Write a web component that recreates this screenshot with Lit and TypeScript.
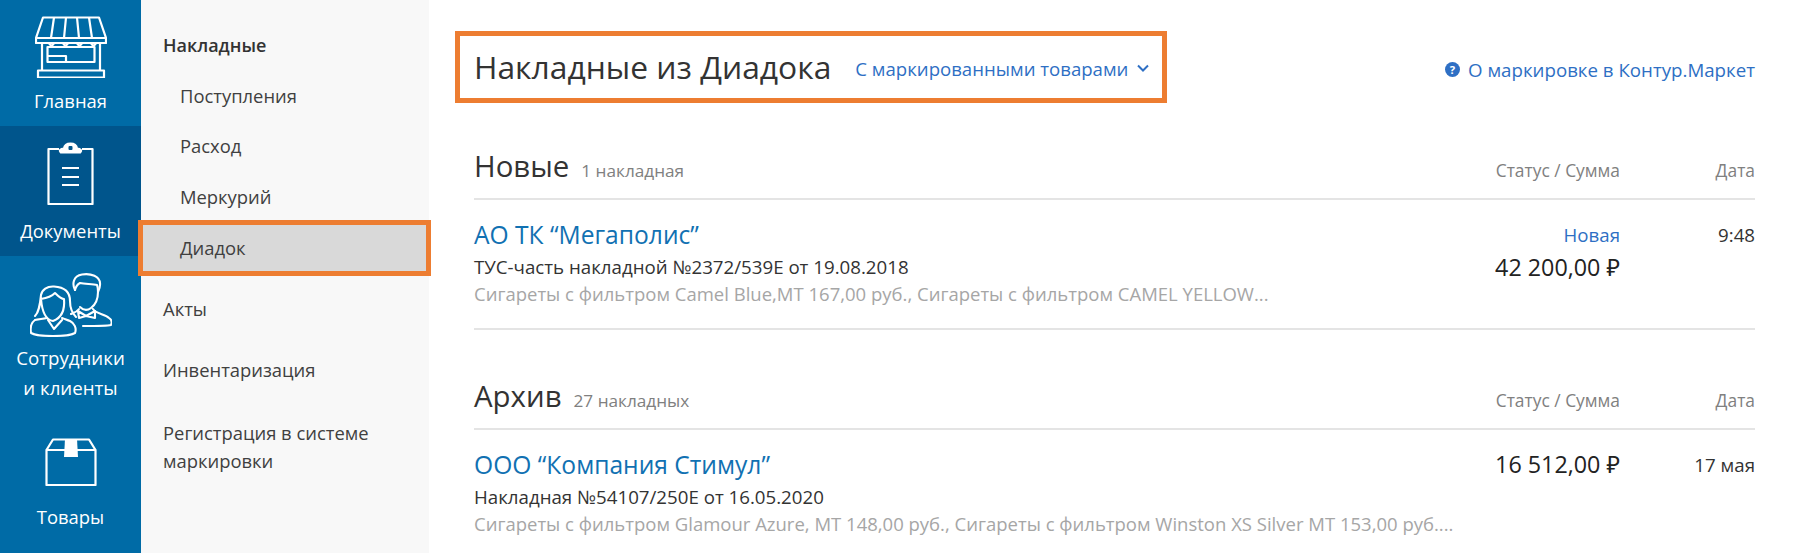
import { LitElement, html, css, svg } from "lit";
import { customElement } from "lit/decorators.js";

const shop = svg`<g fill="none" stroke="#fff" stroke-width="2.2" stroke-linejoin="round">
<path d="M8 1.500H64L71 22V27H1V22Z"/><path d="M1 22H71"/>
<path d="M19 1.500 16 22M31 1.500 29 22M42 1.500 44 22M54 1.500 57 22"/>
<path d="M14 27C15 30 18 30 19 27M28 27C29 30 32 30 33 27M42 27C43 30 46 30 47 27M56 27C57 30 60 30 61 27"/>
<path d="M7 27V54M65 27V54"/><path d="M12.500 31H59.500V46H12.500Z"/><path d="M12.500 40H31V46"/>
<path d="M3 54.500H69V61.500H3Z"/></g>`;
const doc = svg`<g fill="none" stroke="#fff" stroke-width="2.2" stroke-linejoin="round">
<path d="M12 8H1.500V63H45.500V8H35"/>
<path d="M14 11.500C12 10 13 7.500 17 7.500C18 1 29 1 30 7.500C34 7.500 35 10 33 11.500Z" fill="#fff"/>
<path d="M15 27H32M15 36H32M15 44H32"/></g><rect x="21.500" y="5" width="4" height="4" rx="1" fill="#00558c"/>`;
const people = svg`<g fill="none" stroke="#fff" stroke-width="2.1" stroke-linejoin="round" stroke-linecap="round">
<path d="M45 17C42 11 43 3 52 1.500C60 0 71 3 70 12C70 15 69 17 68 19"/>
<path d="M45 17C46 13 48 11 50 10C55 11 63 11 67 12C68 14 68 17 68 19C68 26 65 32 61 35C57 38 53 37 50 34"/>
<path d="M49 36C47 39 43 40 41 41M63 36C66 41 75 41 79 45C82 47 82 50 81 52C77 53 65 53 53 53"/>
<path d="M48 38 56 43 65 38 65 45 56 43 49 45Z"/>
<path d="M11 22C12 17 17 13 24 13.500C33 14 40 18 40 28C40 36 43 41 46 44"/>
<path d="M11 22C10 32 9 39 5 43M11 26C17 25 22 23 25 20C29 24 33 26 34 26C35 37 31 45 23 48C16 47 12 38 11 26Z"/>
<path d="M18 47 24 56 32 47M5 47C2 49 0 54 1 60C8 64 38 64 45 60C47 55 44 50 40 48C37 47 35 46 32 45M17 45C13 46 8 46 5 47Z"/></g>`;
const box = svg`<g fill="none" stroke="#fff" stroke-width="2.200" stroke-linejoin="round">
<path d="M1.500 12H50.500V47H1.500Z"/><path d="M1.500 12 8 1.500H44L50.500 12"/></g>
<path d="M20 1H32L33 19H19Z" fill="#fff"/>`;

interface Row { name: string; doc: string; desc: string; status?: string; sum: string; date: string; }
const sections: { title: string; count: string; rows: Row[] }[] = [
  { title: "Новые", count: "1 накладная", rows: [{ name: "АО ТК “Мегаполис”", doc: "ТУС-часть накладной №2372/539Е от 19.08.2018", desc: "Сигареты с фильтром Camel Blue,МТ 167,00 руб., Сигареты с фильтром CAMEL YELLOW...", status: "Новая", sum: "42 200,00 ₽", date: "9:48" }] },
  { title: "Архив", count: "27 накладных", rows: [{ name: "ООО “Компания Стимул”", doc: "Накладная №54107/250Е от 16.05.2020", desc: "Сигареты с фильтром Glamour Azure, МТ 148,00 руб., Сигареты с фильтром Winston XS Silver МТ 153,00 руб....", sum: "16 512,00 ₽", date: "17 мая" }] },
];

@customElement("app-root")
export class AppRoot extends LitElement {
  static styles = css`
    :host { display: flex; width: 1800px; height: 553px; overflow: hidden; background: #fff; font-family: "Open Sans", "Noto Sans", sans-serif; color: #333; }
    .rail { width: 141px; flex: none; background: #006ba6; color: #fff; display: flex; flex-direction: column; font-size: 18.4px; line-height: 24px; }
    .rail-item { display: flex; flex-direction: column; align-items: center; text-align: center; box-sizing: border-box; }
    .rail-item svg { display: block; }
    .home { height: 126px; padding-top: 16px; }
    .home span { margin-top: 11px; }
    .docs { height: 130px; background: #00558c; padding-top: 15px; }
    .docs span { margin-top: 14px; }
    .people { height: 168px; padding-top: 17px; line-height: 30px; font-size: 18.7px; }
    .people span { margin-top: 6px; }
    .goods { padding-top: 14px; }
    .goods span { margin-top: 19px; }
    .nav { width: 288px; flex: none; background: #f8f8f8; padding-top: 31px; box-sizing: border-box; font-size: 18.4px; color: #404040; line-height: 28px; }
    .nav-h { padding-left: 22px; font-weight: 600; color: #333; font-size: 18px; }
    .nav-sub { padding-left: 39px; margin-top: 22.67px; }
    .nav-active { margin: 9px -2px 0 -3px; height: 56px; box-sizing: border-box; border: 5px solid #ed7d31; background: #d9d9d9; padding: 9px 0 0 37px; }
    .nav-top { padding-left: 22px; margin-top: 33px; }
    .nav-top.first { margin-top: 19px; }
    .nav-top.reg { margin-top: 35px; }
    .main { flex: 1; padding: 31px 45px 0 45px; min-width: 0; }
    .head { display: flex; justify-content: space-between; align-items: center; }
    .head-box { margin-left: -19px; width: 712px; height: 72px; box-sizing: border-box; border: 5px solid #ed7d31; display: flex; align-items: center; padding-left: 14px; }
    .title { font-size: 31.8px; color: #333; margin-top: -2px; white-space: nowrap; }
    .filter { margin-left: 24px; font-size: 18.6px; color: #2e6fc4; display: flex; align-items: center; gap: 9px; margin-top: 2px; white-space: nowrap; }
    .about { font-size: 18.7px; color: #2e6fc4; display: flex; align-items: center; gap: 8px; margin-top: 4px; }
    .sec-head { display: flex; align-items: baseline; height: 56px; border-bottom: 2px solid #e4e4e4; box-sizing: border-box; padding-top: 2px; }
    .sec-title { font-size: 29.4px; color: #333; }
    .sec-count { font-size: 17.2px; color: #808080; margin-left: 12px; }
    .col-status { width: 160px; text-align: right; flex: none; padding-top: 2px; }
    .col-date { width: 135px; text-align: right; flex: none; }
    .spacer { flex: 1; min-width: 0; }
    .th { font-size: 17.4px; color: #808080; padding: 0; }
    .row { display: flex; border-bottom: 2px solid #e4e4e4; height: 130px; box-sizing: border-box; padding-top: 16px; }
    .name { font-size: 24.6px; color: #1171b2; line-height: 38px; }
    .doc { font-size: 18.7px; color: #333; line-height: 26px; }
    .desc { font-size: 18.5px; color: #a6a6a6; line-height: 28px; white-space: nowrap; }
    .status { font-size: 18.7px; color: #2e6fc4; line-height: 33px; }
    .sum { font-size: 23.3px; color: #222; line-height: 32px; white-space: nowrap; }
    .date { font-size: 18.7px; color: #333; line-height: 32px; padding-top: 3px; }
    .gap-first { height: 41px; }
    .gap { height: 44px; }
  `;
  render() {
    return html`
      <div class="rail">
        <div class="rail-item home"><svg width="72" height="62" viewBox="0 0 72 62">${shop}</svg><span>Главная</span></div>
        <div class="rail-item docs"><svg width="47" height="64" viewBox="0 0 47 64">${doc}</svg><span>Документы</span></div>
        <div class="rail-item people"><svg width="82" height="64" viewBox="0 0 82 64">${people}</svg><span>Сотрудники<br />и клиенты</span></div>
        <div class="rail-item goods"><svg width="52" height="48" viewBox="0 0 52 48">${box}</svg><span>Товары</span></div>
      </div>
      <div class="nav">
        <div class="nav-h">Накладные</div>
        <div class="nav-sub">Поступления</div>
        <div class="nav-sub">Расход</div>
        <div class="nav-sub">Меркурий</div>
        <div class="nav-active">Диадок</div>
        <div class="nav-top first">Акты</div>
        <div class="nav-top">Инвентаризация</div>
        <div class="nav-top reg">Регистрация в системе<br />маркировки</div>
      </div>
      <div class="main">
        <div class="head">
          <div class="head-box">
            <span class="title">Накладные из Диадока</span>
            <span class="filter">С маркированными товарами
              <svg width="12" height="8" viewBox="0 0 12 8"><path d="M1 1.500 6 6.500 11 1.500" fill="none" stroke="#2e6fc4" stroke-width="2"/></svg></span>
          </div>
          <span class="about">
            <svg width="15" height="15" viewBox="0 0 16 16"><circle cx="8" cy="8" r="8" fill="#2e6fc4"/><text x="8" y="12.500" text-anchor="middle" font-size="12" font-weight="700" fill="#fff" font-family="Open Sans">?</text></svg>
            О маркировке в Контур.Маркет</span>
        </div>
        ${sections.map((s, i) => html`
          <div class=${i ? "gap" : "gap-first"}></div>
          <div class="sec-head">
            <span class="sec-title">${s.title}</span><span class="sec-count">${s.count}</span>
            <span class="spacer"></span>
            <span class="col-status th">Статус / Сумма</span><span class="col-date th">Дата</span>
          </div>
          ${s.rows.map((r) => html`
            <div class="row">
              <div class="spacer">
                <div class="name">${r.name}</div><div class="doc">${r.doc}</div><div class="desc">${r.desc}</div>
              </div>
              <div class="col-status">
                ${r.status ? html`<div class="status">${r.status}</div>` : ""}
                <div class="sum">${r.sum}</div>
              </div>
              <div class="col-date date">${r.date}</div>
            </div>`)}`)}
      </div>
    `;
  }
}
